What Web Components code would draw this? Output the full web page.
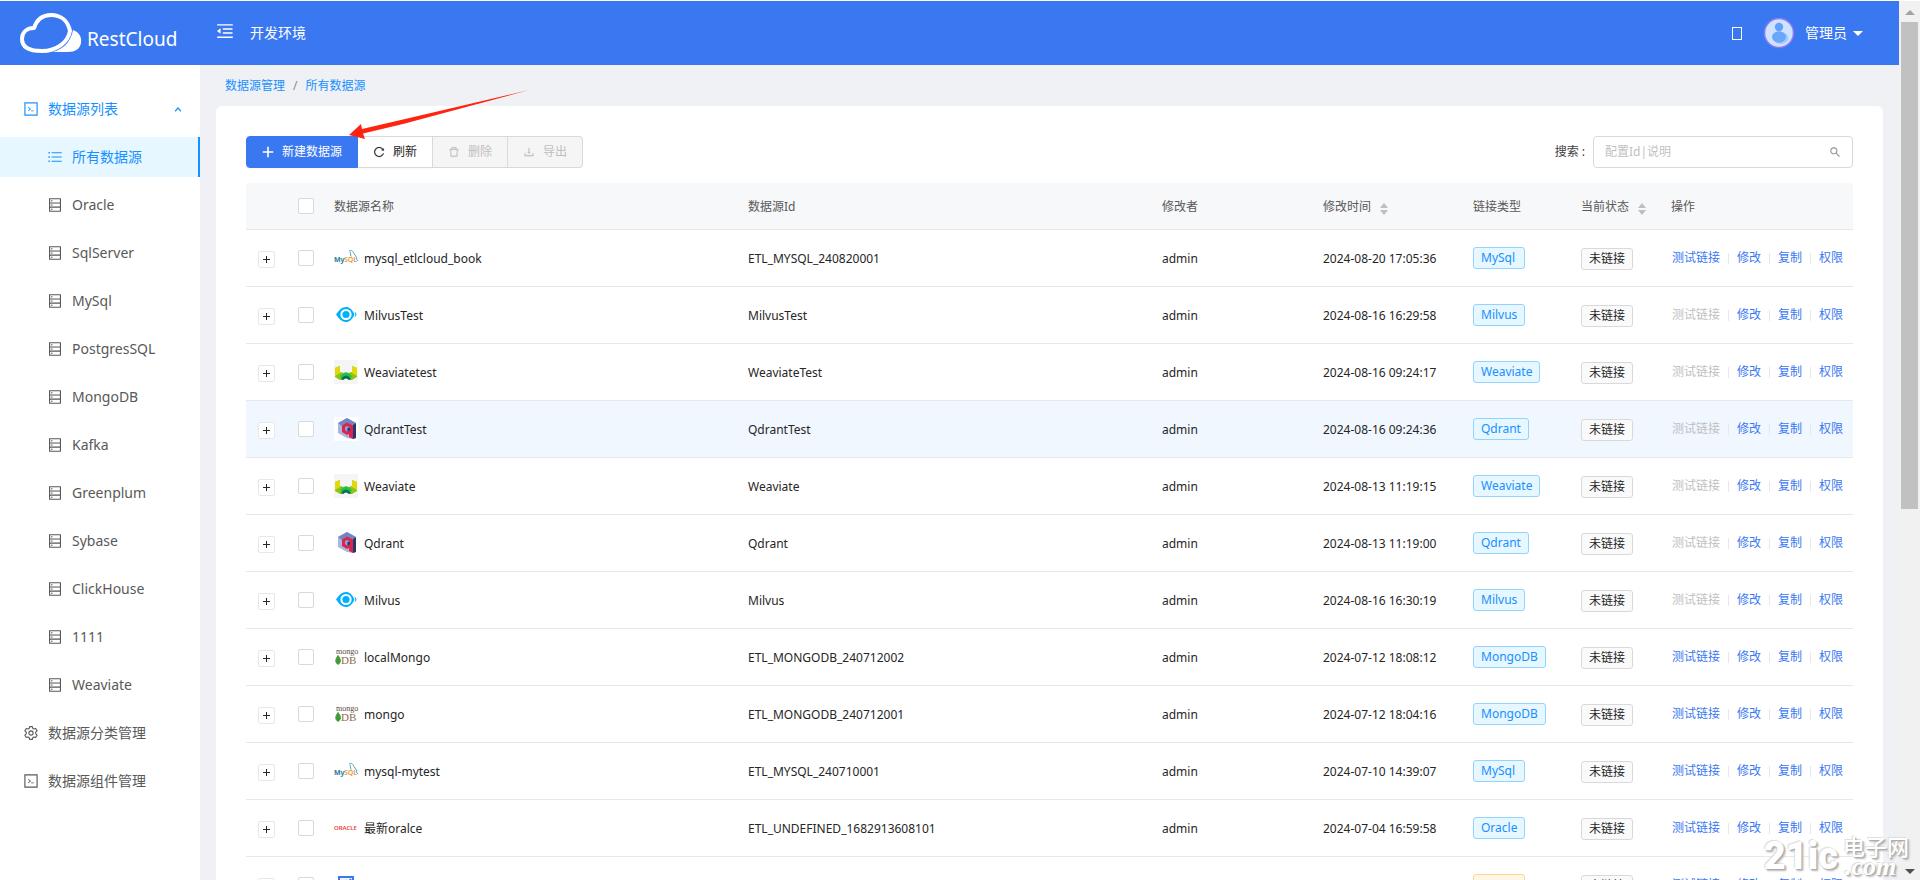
<!DOCTYPE html>
<html lang="zh-CN">
<head>
<meta charset="utf-8">
<title>RestCloud</title>
<style>
html,body{margin:0;height:100%;overflow:hidden}
body{font:12px/18px "Noto Sans","Noto Sans CJK SC",sans-serif;color:#262626;background:#fff;
--brand:#3a78f2;--link:#1890ff;--page:#f0f1f5;--line:#e8e8e8;--edge:#d9d9d9}
</style>
</head>
<body>
<rc-app>
  <rc-header slot="header" env="开发环境" user="管理员"></rc-header>
  <rc-sidebar slot="side"></rc-sidebar>
  <rc-breadcrumb slot="crumbs"></rc-breadcrumb>
  <rc-card>
    <rc-toolbar></rc-toolbar>
    <rc-table></rc-table>
  </rc-card>
  <rc-scrollbar slot="scroll"></rc-scrollbar>
  <rc-pointer slot="overlay"></rc-pointer>
  <rc-watermark slot="overlay"></rc-watermark>
</rc-app>

<script>
const define = (name, html, init) => {
  const tpl = document.createElement('template');
  tpl.innerHTML = html;
  customElements.define(name, class extends HTMLElement {
    constructor() {
      super();
      this.attachShadow({mode: 'open'}).append(tpl.content.cloneNode(true));
    }
    connectedCallback() { if (init) init(this, this.shadowRoot); }
  });
};

/* ---------- icons ---------- */
const GLYPHS = {
  code: '<path d="M516 673c0 4.4 3.4 8 7.5 8h185c4.1 0 7.5-3.6 7.5-8v-48c0-4.4-3.4-8-7.5-8h-185c-4.1 0-7.5 3.6-7.5 8v48zm-194.9 6.1l192-161c3.8-3.2 3.8-9.1 0-12.3l-192-160.9A7.95 7.95 0 0 0 308 351v62.7c0 2.4 1 4.6 2.9 6.1L420.7 512l-109.8 92.2a8.1 8.1 0 0 0-2.9 6.1V673c0 6.8 7.9 10.5 13.1 6.1zM1000 24H24v976h976V24zM915 915H109V109h806v806z"/>',
  database: '<path d="M930 10H94c-12 0-20 8-20 20v964c0 12 8 20 20 20h836c12 0 20-8 20-20V30c0-12-8-20-20-20zM156 90h712v232H156V90zm712 536H156V402h712v224zm0 308H156V706h712v228z"/><circle cx="280" cy="206" r="52"/><circle cx="280" cy="514" r="52"/><circle cx="280" cy="820" r="52"/>',
  list: '<path d="M260 160h740v74H260zM260 475h740v74H260zM260 790h740v74H260zM30 145h104v104H30zM30 460h104v104H30zM30 775h104v104H30z"/>',
  fold: '<path d="M408 442h480c4.4 0 8-3.6 8-8v-56c0-4.4-3.6-8-8-8H408c-4.4 0-8 3.6-8 8v56c0 4.4 3.6 8 8 8zm-8 204c0 4.4 3.6 8 8 8h480c4.4 0 8-3.6 8-8v-56c0-4.4-3.6-8-8-8H408c-4.4 0-8 3.6-8 8v56zm504-486H120c-4.4 0-8 3.6-8 8v56c0 4.4 3.6 8 8 8h784c4.4 0 8-3.6 8-8v-56c0-4.4-3.6-8-8-8zm0 632H120c-4.4 0-8 3.6-8 8v56c0 4.4 3.6 8 8 8h784c4.4 0 8-3.6 8-8v-56c0-4.4-3.6-8-8-8zM115.4 518.9L271.7 642c5.8 4.6 14.4.5 14.4-6.9V388.9c0-7.4-8.5-11.5-14.4-6.9L115.4 505.1a8.74 8.74 0 0 0 0 13.8z"/>',
  plus: '<path d="M444 70h136v374h374v136H580v374H444V580H70V444h374z"/>',
  reload: '<path d="M909.1 209.3l-56.4 44.1C775.8 155.1 656.2 92 521.9 92 290 92 102.3 279.5 102 511.5 101.7 743.7 289.8 932 521.9 932c181.3 0 335.8-115 394.6-276.1 1.5-4.2-.7-8.9-4.9-10.3l-56.7-19.5a8 8 0 0 0-10.1 4.8c-1.8 5-3.8 10-5.9 14.9-17.3 41-42.1 77.8-73.7 109.4A344.77 344.77 0 0 1 655.9 829c-42.3 17.9-87.4 27-133.8 27-46.5 0-91.5-9.1-133.8-27A341.5 341.5 0 0 1 279 755.2a342.16 342.16 0 0 1-73.7-109.4c-17.9-42.4-27-87.4-27-133.9s9.1-91.5 27-133.9c17.3-41 42.1-77.8 73.7-109.4 31.6-31.6 68.4-56.4 109.3-73.8 42.3-17.9 87.4-27 133.8-27 46.5 0 91.5 9.1 133.8 27a341.5 341.5 0 0 1 109.3 73.8c9.9 9.9 19.2 20.4 27.8 31.4l-60.2 47a8 8 0 0 0 3 14.1l175.6 43c5 1.2 9.9-2.6 9.9-7.7l.8-180.9c-.1-6.6-7.8-10.3-13-6.2z" stroke="currentColor" stroke-width="20"/>',
  trash: '<path d="M360 184h304v72h72v-80c0-35.3-28.7-64-64-64H352c-35.3 0-64 28.7-64 64v80h72v-72zm504 72H160c-17.7 0-32 14.3-32 32v32c0 4.4 3.6 8 8 8h60.4l24.7 523c1.6 34.1 29.8 61 63.9 61h454c34.2 0 62.3-26.8 63.9-61l24.7-523H888c4.4 0 8-3.6 8-8v-32c0-17.7-14.3-32-32-32zM731.3 840H292.7l-24.2-512h487l-24.2 512z" stroke="currentColor" stroke-width="20"/>',
  download: '<path d="M505.7 661a8 8 0 0 0 12.6 0l112-141.7c4.1-5.2.4-12.9-6.3-12.9h-74.1V168c0-4.4-3.6-8-8-8h-60c-4.4 0-8 3.6-8 8v338.3H400c-6.7 0-10.4 7.7-6.3 12.9l112 141.8zM878 626h-60c-4.4 0-8 3.6-8 8v154H214V634c0-4.4-3.6-8-8-8h-60c-4.4 0-8 3.6-8 8v198c0 17.7 14.3 32 32 32h684c17.7 0 32-14.3 32-32V634c0-4.4-3.6-8-8-8z" stroke="currentColor" stroke-width="20"/>',
  search: '<path d="M909.6 854.5L649.9 594.8C690.2 542.7 712 479 712 412c0-80.2-31.3-155.4-87.9-212.1-56.6-56.7-132-87.9-212.1-87.9s-155.5 31.3-212.1 87.9C143.2 256.5 112 331.8 112 412c0 80.1 31.3 155.5 87.9 212.1C256.5 680.8 331.8 712 412 712c67 0 130.6-21.8 182.7-62l259.7 259.6a8.2 8.2 0 0 0 11.6 0l43.6-43.5a8.2 8.2 0 0 0 0-11.6zM570.4 570.4C528 612.7 471.8 636 412 636s-116-23.3-158.4-65.6C211.3 528 188 471.8 188 412s23.3-116.1 65.6-158.4C296 211.3 352.2 188 412 188s116.1 23.2 158.4 65.6S636 352.2 636 412s-23.3 116.1-65.6 158.4z" stroke="currentColor" stroke-width="16"/>',
  gear: '<g fill="none" stroke="currentColor" stroke-width="80" stroke-linejoin="round"><path d="M410 45h204l32 134 78 45 132-40 104 174-102 96v116l102 96-104 174-132-40-78 45-32 134H410l-32-134-78-45-132 40L64 666l102-96V454L64 358l104-174 132 40 78-45z"/><circle cx="512" cy="512" r="155"/></g>',
  up: '<path d="M90 740L512 270l422 470-110 110-312-330-312 330z"/>'
};
define('rc-icon', `<style>
:host{display:inline-flex;flex:none;width:var(--size,14px);height:var(--size,14px)}
svg{width:100%;height:100%;display:block;fill:currentColor}
</style><svg viewBox="0 0 1024 1024" aria-hidden="true"></svg>`, (el, root) => {
  root.querySelector('svg').innerHTML = GLYPHS[el.getAttribute('name')] || '';
});

/* ---------- product marks in the name column ---------- */
const MARKS = {
  mysql: '<text x="0" y="16" font-size="7" font-weight="700" fill="#1f7a9c">My</text><text x="10" y="16" font-size="7" font-weight="600" fill="#e0953a">SQL</text><path d="M15 5c2-1.500 4 0 5 2.500l3 4.500-1 .5 2 2.500M16 5.500c0 2 1 3 1 5" fill="none" stroke="#3e8aa8" stroke-width=".8"/>',
  milvus: '<path d="M2 11.500C5 7 8 4 12 4c3.500 0 6 2.500 8 6.500q.6 1 0 2C18 16.500 15.500 19 12 19 8 19 5 16 2 11.500z" fill="#00b0ff"/><circle cx="12" cy="11.500" r="5.600" fill="#fff"/><circle cx="12" cy="11.500" r="3.600" fill="#00b0ff"/><path d="M20.500 8.500q4 3 0 6 1.500-3 0-6z" fill="#00b0ff"/>',
  weaviate: '<path fill="#f5f5f5" d="M0 0h24v24H0z"/><path d="M1 8l5-2v6l4 1 2-1 2 1 4-1V6l5 2v9l-5 3h-3l-3-3-3 3H6l-5-3z" fill="#8fc31a"/><path d="M1 8l5-2v7l-5 3zM23 8l-5-2v7l5 3z" fill="#e2d90c"/><path d="M6 16l4-3q2-1 4 0l4 3-2 3-4-2-4 2z" fill="#16c64a"/><path d="M7 19q5-7 10 0l-2 1q-3-3-6 0z" fill="#0a6b5c"/>',
  qdrant: '<path fill="#fff" d="M0 0h24v24H0z"/><path d="M13 1l9 5v15l-3 1-6-1-9-5V6z" fill="#a9b6e0"/><path d="M13 1l9 5-4 3-5-3-5 3-4-3z" fill="#7087c4"/><path d="M19 8l3-2v15l-3 1z" fill="#24386c"/><path d="M8 8.500l5-3 6 3V22l-4-2v-3l-2 1-5-3z" fill="#dc244c"/><path d="M11 10l2-1 3 1.500v3L13.500 15 11 13z" fill="#8f9fd6"/><path d="M13.500 11l2.500-.5v3L13.500 15z" fill="#24386c"/>',
  mongo: '<text x="2" y="9" font-family="Liberation Serif,serif" font-size="8" fill="#5b4636">mongo</text><path d="M4 10.500q5 6 0 9-4.500-3 0-9z" fill="#3f9c35" stroke="#3f9c35"/><text x="7" y="19" font-family="Liberation Serif,serif" font-size="11" fill="#8a6b52">DB</text>',
  oracle: '<text x="0" y="14" font-size="6" font-weight="600" fill="#ee3b3b">ORACLE</text>',
  chart: '<path d="M5 4h14v14H5z" fill="#f0f5ff" stroke="#3a78f2" stroke-width="2"/><path d="M8 12l4-4 2 2 3-4" fill="none" stroke="#3a78f2" stroke-width="2"/>'
};
define('rc-mark', `<style>
:host{display:inline-flex;flex:none;width:24px;height:24px}
svg{width:24px;height:24px;display:block;overflow:visible}
</style><svg viewBox="0 0 24 24" aria-hidden="true"></svg>`, (el, root) => {
  root.querySelector('svg').innerHTML = MARKS[el.getAttribute('name')] || '';
});

/* ---------- page frame ---------- */
define('rc-app', `<style>
:host{display:grid;box-sizing:border-box;height:100vh;padding-top:1px;overflow:hidden;position:relative;
grid-template:64px minmax(0,1fr) / 200px minmax(0,1fr) 21px}
.head{grid-column:1 / 3}
.scroll{grid-column:3;grid-row:1 / 3;display:grid}
.side{background:#fff;overflow:hidden}
main{background:var(--page);overflow:hidden;padding:0 16px}
</style>
<div class="head"><slot name="header"></slot></div>
<div class="side"><slot name="side"></slot></div>
<main><slot name="crumbs"></slot><slot></slot></main>
<div class="scroll"><slot name="scroll"></slot></div>
<slot name="overlay"></slot>`);

define('rc-header', `<style>
:host{display:flex;align-items:center;height:64px;background:var(--brand);color:#fff;font-size:14px;line-height:22px}
.brand{display:flex;align-items:center;width:195px;padding-left:20px;height:64px;color:#fff;text-decoration:none;font-size:19px;box-sizing:border-box;gap:4px}
.brand span{padding-top:12px}
.logo{width:63px;height:40px;flex:none}
button{all:unset;display:flex;cursor:pointer}
.fold{--size:20px;margin:0 15px 4px 20px}
.right{margin-left:auto;padding-right:36px;display:flex;align-items:center}
.box{width:8px;height:11px;border:1px solid #fff;margin-right:21px}
.avatar{width:32px;height:32px;margin-right:10px}
.caret{margin-left:6px;border:5px solid transparent;border-top-color:#fff;border-bottom:0}
</style>
<a class="brand" href="#"><svg class="logo" viewBox="0 0 63 40" aria-hidden="true">
<path d="M53 17c6 2 9 7 8 13-1 6-6 9-13 9H33c10-3 18-10 20-22z" fill="#fff"/>
<path d="M14 15C17 6 23 2 31 2c10 0 17 6 19 16-2 11-13 20-28 20C9 38 2 34 2 26c0-7 5-11 12-11z" fill="var(--brand)" stroke="#fff" stroke-width="4" stroke-linejoin="round"/></svg><span>RestCloud</span></a>
<button class="fold" aria-label="菜单"><rc-icon name="fold"></rc-icon></button>
<span class="env"></span>
<div class="right"><span class="box"></span>
<svg class="avatar" viewBox="0 0 32 32" aria-hidden="true"><circle cx="16" cy="16" r="14.500" fill="#cfe2fe" stroke="#8b7af0" stroke-width="1.500"/><ellipse cx="18" cy="21" rx="7.500" ry="6" fill="#a5cbfd"/><circle cx="16" cy="10" r="4.200" fill="#62a0fb"/><ellipse cx="16" cy="20" rx="7" ry="5.800" fill="#6aa7fb"/></svg>
<button><span class="user"></span></button><span class="caret"></span></div>`, (el, root) => {
  root.querySelector('.env').textContent = el.getAttribute('env');
  root.querySelector('.user').textContent = el.getAttribute('user');
});

/* ---------- sidebar ---------- */
define('rc-nav-item', `<style>
:host{display:block;margin-bottom:8px;font-size:14px;line-height:40px;color:#595959}
a{display:flex;align-items:center;gap:10px;height:40px;padding:0 18px 0 24px;color:inherit;text-decoration:none;box-sizing:border-box}
:host([sub]) a{padding-left:48px}
:host([open]){color:var(--link)}
:host([active]) a{color:var(--link);background:#e6f7ff;border-right:2px solid var(--link)}
.arrow{margin-left:auto;--size:8px;display:none}
:host([open]) .arrow{display:flex}
</style><a href="#"><rc-icon></rc-icon><slot></slot><rc-icon class="arrow" name="up"></rc-icon></a>`, (el, root) => {
  const i = root.querySelector('rc-icon');
  i.setAttribute('name', el.getAttribute('icon'));
  i.shadowRoot.querySelector('svg').innerHTML = GLYPHS[el.getAttribute('icon')];
});
const SOURCES = ['Oracle','SqlServer','MySql','PostgresSQL','MongoDB','Kafka','Greenplum','Sybase','ClickHouse','1111','Weaviate'];
define('rc-sidebar', `<style>
:host{display:block;padding-top:24px}
</style><nav>
<rc-nav-item icon="code" open>数据源列表</rc-nav-item>
<rc-nav-item icon="list" sub active>所有数据源</rc-nav-item>
${SOURCES.map(s => `<rc-nav-item icon="database" sub>${s}</rc-nav-item>`).join('')}
<rc-nav-item icon="gear">数据源分类管理</rc-nav-item>
<rc-nav-item icon="code">数据源组件管理</rc-nav-item>
</nav>`);

define('rc-breadcrumb', `<style>
:host{display:flex;align-items:center;gap:8px;height:41px;padding-left:9px;color:#8c8c8c}
a{color:var(--link);text-decoration:none}
</style><a href="#">数据源管理</a><span>/</span><a href="#">所有数据源</a>`);

define('rc-card', `<style>
:host{display:block;background:#fff;border-radius:6px;padding:30px}
</style><slot></slot>`);

/* ---------- toolbar ---------- */
define('rc-toolbar', `<style>
:host{display:flex;justify-content:space-between;align-items:center;margin-bottom:15px}
.group{display:flex}
button{display:flex;align-items:center;gap:8px;height:32px;padding:0 15px;box-sizing:border-box;border:1px solid var(--edge);border-left-width:0;background:#fff;color:#262626;font:inherit;box-shadow:0 2px 0 rgba(0,0,0,.02);--size:12px}
button.primary{background:var(--brand);border:1px solid var(--brand);color:#fff;border-radius:4px 0 0 4px}
button:disabled{background:#f5f5f5;color:#bfbfbf;box-shadow:none}
button:last-child{border-radius:0 4px 4px 0}
.find{display:flex;align-items:center;gap:8px}
label{color:#404040}
.field{display:flex;align-items:center;width:260px;height:32px;box-sizing:border-box;border:1px solid var(--edge);border-radius:4px;padding:0 11px;color:#8c8c8c;--size:12px}
input{flex:1;min-width:0;border:0;outline:0;padding:0;background:none;font:inherit}
input::placeholder{color:#bfbfbf}
</style>
<div class="group">
<button class="primary"><rc-icon name="plus"></rc-icon>新建数据源</button>
<button><rc-icon name="reload"></rc-icon>刷新</button>
<button disabled><rc-icon name="trash"></rc-icon>删除</button>
<button disabled><rc-icon name="download"></rc-icon>导出</button>
</div>
<div class="find"><label for="q">搜索 :</label><div class="field"><input id="q" type="text" placeholder="配置Id|说明"><rc-icon name="search"></rc-icon></div></div>`);

/* ---------- table ---------- */
define('rc-tag', `<style>
:host{display:inline-block;box-sizing:border-box;height:22px;min-width:52px;line-height:20px;padding:0 7px;border:1px solid #91d5ff;border-radius:3px;background:#e6f7ff;color:var(--link);vertical-align:top}
:host([tone="warn"]){border-color:#ffd591;background:#fff7e6}
</style><slot></slot>`);

define('rc-sorter', `<style>
:host{display:inline-flex;flex-direction:column;gap:2px;margin-left:9px;vertical-align:middle;padding-top:3px}
i{border:4px solid transparent}
.a{border-bottom:5px solid #bfbfbf;border-top:0}
.b{border-top:5px solid #bfbfbf;border-bottom:0}
</style><i class="a"></i><i class="b"></i>`);

const ROWS = [
  ['mysql','mysql_etlcloud_book','ETL_MYSQL_240820001','2024-08-20 17:05:36','MySql',1],
  ['milvus','MilvusTest','MilvusTest','2024-08-16 16:29:58','Milvus',0],
  ['weaviate','Weaviatetest','WeaviateTest','2024-08-16 09:24:17','Weaviate',0],
  ['qdrant','QdrantTest','QdrantTest','2024-08-16 09:24:36','Qdrant',0,'hover'],
  ['weaviate','Weaviate','Weaviate','2024-08-13 11:19:15','Weaviate',0],
  ['qdrant','Qdrant','Qdrant','2024-08-13 11:19:00','Qdrant',0],
  ['milvus','Milvus','Milvus','2024-08-16 16:30:19','Milvus',0],
  ['mongo','localMongo','ETL_MONGODB_240712002','2024-07-12 18:08:12','MongoDB',1],
  ['mongo','mongo','ETL_MONGODB_240712001','2024-07-12 18:04:16','MongoDB',1],
  ['mysql','mysql-mytest','ETL_MYSQL_240710001','2024-07-10 14:39:07','MySql',1],
  ['oracle','最新oralce','ETL_UNDEFINED_1682913608101','2024-07-04 16:59:58','Oracle',1],
  ['chart','','','','',1]
];
define('rc-table', `<style>
:host{display:block}
table{width:100%;table-layout:fixed;border-collapse:separate;border-spacing:0}
th,td{padding:0 16px;text-align:left;font-weight:400;border-bottom:1px solid var(--line);white-space:nowrap;box-sizing:border-box}
th{height:47px;padding-top:2px;background:#f7f8fa;color:#595959}
th:first-child{border-radius:4px 0 0 0}
th:last-child{border-radius:0 4px 0 0}
td{height:57px}
td.t{padding-top:2px}
tr.hover td{background:#f0f7ff}
.x{padding:3px 0 0 12px}
.c{padding:0 0 0 8px}
col.n1{width:44px}col.n2{width:28px}col.n5{width:161px}col.n6{width:150px}col.n7{width:108px}col.n8{width:90px}col.n9{width:198px}
.name{display:flex;align-items:center;gap:6px}
.name span{padding-top:2px}
.expand{display:grid;place-items:center;width:17px;height:17px;padding:0;border:1px solid var(--line);border-radius:2px;background:#fff;color:#262626}
.expand svg{display:block}
input{appearance:none;display:block;margin:0;width:16px;height:16px;border:1px solid var(--edge);border-radius:2px;background:#fff}
.state{height:22px;padding:0 7px;border:1px solid var(--edge);border-radius:3px;background:#fafafa;font:inherit;line-height:20px;color:#1f1f1f;display:block;box-sizing:border-box}
td.ops{padding-right:0}
.links{display:flex;align-items:center;padding-left:1px}
.links a{color:var(--brand);text-decoration:none}
.links a.off{color:#bfbfbf}
.links i{width:1px;height:11px;margin:0 8px;background:#e8e8e8}
</style>
<table>
<colgroup><col class="n1"><col class="n2"><col><col><col class="n5"><col class="n6"><col class="n7"><col class="n8"><col class="n9"></colgroup>
<thead><tr><th class="x"></th><th class="c"><input type="checkbox" aria-label="全选"></th><th>数据源名称</th><th>数据源Id</th><th>修改者</th><th>修改时间<rc-sorter></rc-sorter></th><th>链接类型</th><th>当前状态<rc-sorter></rc-sorter></th><th>操作</th></tr></thead>
<tbody></tbody></table>`, (el, root) => {
  root.querySelector('tbody').innerHTML = ROWS.map(([mark, name, id, time, type, on, cls]) => `<tr class="${cls || ''}">
<td class="x"><button class="expand" aria-label="展开"><svg width="9" height="9" viewBox="0 0 9 9"><path d="M4 1h1v3h3v1H5v3H4V5H1V4h3z" fill="currentColor"/></svg></button></td>
<td class="c"><input type="checkbox" aria-label="选择"></td>
<td><div class="name"><rc-mark name="${mark}"></rc-mark><span>${name}</span></div></td>
<td class="t">${id}</td><td class="t">${name ? 'admin' : ''}</td><td class="t">${time}</td>
<td><rc-tag ${type ? '' : 'tone="warn"'}>${type}</rc-tag></td>
<td class="t"><button class="state">未链接</button></td>
<td class="ops"><div class="links"><a href="#" class="${on ? '' : 'off'}">测试链接</a><i></i><a href="#">修改</a><i></i><a href="#">复制</a><i></i><a href="#">权限</a></div></td></tr>`).join('');
});

/* ---------- scrollbar and overlays ---------- */
define('rc-scrollbar', `<style>
:host{display:flex;flex-direction:column;align-items:center;background:#f1f1f1;box-sizing:border-box;padding:9px 0 6px}
.up,.down{border:5px solid transparent}
.up{border-top:0;border-bottom-color:#a3a3a3}
.down{border-bottom:0;border-top-color:#505050}
.thumb{width:17px;flex:23;margin-top:7px;background:#c1c1c1}
.rest{flex:17}
</style><span class="up"></span><span class="thumb"></span><span class="rest"></span><span class="down"></span>`);

define('rc-pointer', `<style>
:host{position:absolute;left:348px;top:88px;pointer-events:none}
svg{display:block}
</style><svg width="184" height="54" viewBox="0 0 184 54" aria-hidden="true"><path d="M181 2L55 31.500 14 41 13 36 1 47l16 4-2-5.500L55 36z" fill="#ff2312"/></svg>`);

define('rc-watermark', `<style>
:host{position:absolute;right:11px;bottom:2px;display:flex;align-items:center;gap:5px;color:#fff;pointer-events:none;
text-shadow:1px 1px 1px #aaa,2px 2px 2px #bbb,-1px -1px 1px #ddd}
b{font:900 38px/44px Roboto,sans-serif}
div{display:flex;flex-direction:column}
span{font-size:22px;line-height:22px;font-weight:500}
em{font:italic 700 26px/20px "Liberation Serif",serif;padding-left:2px}
</style><b>21ic</b><div><span>电子网</span><em>.com</em></div>`);
</script>
</body>
</html>
